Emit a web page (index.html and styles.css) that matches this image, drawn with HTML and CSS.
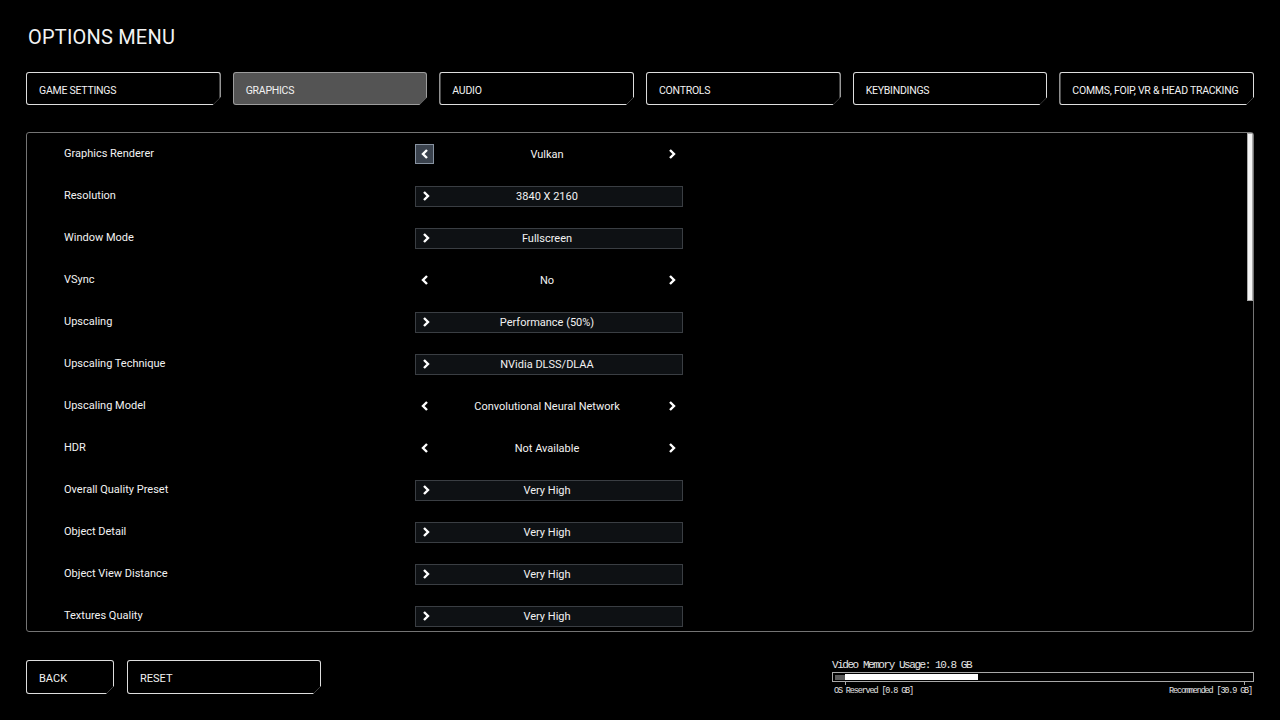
FILE: index.html
```html
<!DOCTYPE html>
<html lang="en">
<head>
  <meta charset="UTF-8">
  <title>Options Menu</title>
  <link rel="stylesheet" href="styles.css">
</head>
<body>

<div class="page">
  <h1>OPTIONS MENU</h1>

  <!-- Category tabs -->
  <div class="tabs">
    <div class="btn tab"><div class="btn-inner">GAME SETTINGS</div></div>
    <div class="btn tab active"><div class="btn-inner">GRAPHICS</div></div>
    <div class="btn tab"><div class="btn-inner">AUDIO</div></div>
    <div class="btn tab"><div class="btn-inner">CONTROLS</div></div>
    <div class="btn tab"><div class="btn-inner">KEYBINDINGS</div></div>
    <div class="btn tab"><div class="btn-inner">COMMS, FOIP, VR &amp; HEAD TRACKING</div></div>
  </div>

  <!-- Settings list -->
  <div class="panel">
    <div class="rows">
      <div class="row">
        <span class="label">Graphics Renderer</span>
        <div class="picker">
          <span class="arrow focused"><svg class="chev" viewBox="0 0 8 10"><path d="M6 1 2 5l4 4"/></svg></span>
          <span class="value">Vulkan</span>
          <span class="arrow"><svg class="chev" viewBox="0 0 8 10"><path d="M2 1l4 4-4 4"/></svg></span>
        </div>
      </div>
      <div class="row">
        <span class="label">Resolution</span>
        <div class="dropdown">
          <span class="arrow"><svg class="chev" viewBox="0 0 8 10"><path d="M2 1l4 4-4 4"/></svg></span>
          <span class="value">3840 X 2160</span>
        </div>
      </div>
      <div class="row">
        <span class="label">Window Mode</span>
        <div class="dropdown">
          <span class="arrow"><svg class="chev" viewBox="0 0 8 10"><path d="M2 1l4 4-4 4"/></svg></span>
          <span class="value">Fullscreen</span>
        </div>
      </div>
      <div class="row">
        <span class="label">VSync</span>
        <div class="picker">
          <span class="arrow"><svg class="chev" viewBox="0 0 8 10"><path d="M6 1 2 5l4 4"/></svg></span>
          <span class="value">No</span>
          <span class="arrow"><svg class="chev" viewBox="0 0 8 10"><path d="M2 1l4 4-4 4"/></svg></span>
        </div>
      </div>
      <div class="row">
        <span class="label">Upscaling</span>
        <div class="dropdown">
          <span class="arrow"><svg class="chev" viewBox="0 0 8 10"><path d="M2 1l4 4-4 4"/></svg></span>
          <span class="value">Performance (50%)</span>
        </div>
      </div>
      <div class="row">
        <span class="label">Upscaling Technique</span>
        <div class="dropdown">
          <span class="arrow"><svg class="chev" viewBox="0 0 8 10"><path d="M2 1l4 4-4 4"/></svg></span>
          <span class="value">NVidia DLSS/DLAA</span>
        </div>
      </div>
      <div class="row">
        <span class="label">Upscaling Model</span>
        <div class="picker">
          <span class="arrow"><svg class="chev" viewBox="0 0 8 10"><path d="M6 1 2 5l4 4"/></svg></span>
          <span class="value">Convolutional Neural Network</span>
          <span class="arrow"><svg class="chev" viewBox="0 0 8 10"><path d="M2 1l4 4-4 4"/></svg></span>
        </div>
      </div>
      <div class="row">
        <span class="label">HDR</span>
        <div class="picker">
          <span class="arrow"><svg class="chev" viewBox="0 0 8 10"><path d="M6 1 2 5l4 4"/></svg></span>
          <span class="value">Not Available</span>
          <span class="arrow"><svg class="chev" viewBox="0 0 8 10"><path d="M2 1l4 4-4 4"/></svg></span>
        </div>
      </div>
      <div class="row">
        <span class="label">Overall Quality Preset</span>
        <div class="dropdown">
          <span class="arrow"><svg class="chev" viewBox="0 0 8 10"><path d="M2 1l4 4-4 4"/></svg></span>
          <span class="value">Very High</span>
        </div>
      </div>
      <div class="row">
        <span class="label">Object Detail</span>
        <div class="dropdown">
          <span class="arrow"><svg class="chev" viewBox="0 0 8 10"><path d="M2 1l4 4-4 4"/></svg></span>
          <span class="value">Very High</span>
        </div>
      </div>
      <div class="row">
        <span class="label">Object View Distance</span>
        <div class="dropdown">
          <span class="arrow"><svg class="chev" viewBox="0 0 8 10"><path d="M2 1l4 4-4 4"/></svg></span>
          <span class="value">Very High</span>
        </div>
      </div>
      <div class="row">
        <span class="label">Textures Quality</span>
        <div class="dropdown">
          <span class="arrow"><svg class="chev" viewBox="0 0 8 10"><path d="M2 1l4 4-4 4"/></svg></span>
          <span class="value">Very High</span>
        </div>
      </div>
    </div>
    <div class="scroll"><div class="thumb"></div></div>
  </div>

  <!-- Footer: actions + VRAM meter -->
  <div class="footer">
    <div class="actions">
      <div class="btn back"><div class="btn-inner">BACK</div></div>
      <div class="btn reset"><div class="btn-inner">RESET</div></div>
    </div>
    <div class="vram">
      <div class="vram-title">Video Memory Usage: 10.8 GB</div>
      <div class="vram-bar">
        <span class="seg-os"></span>
        <span class="seg-used"></span>
        <span class="tick tick-os"></span>
        <span class="tick tick-rec"></span>
      </div>
      <div class="vram-notes">
        <span>OS Reserved [0.8 GB]</span>
        <span>Recommended [30.9 GB]</span>
      </div>
    </div>
  </div>
</div>

</body>
</html>
```

FILE: styles.css
```css
body {
  margin: 0;
  background: #000;
  color: #f2f2f2;
  font-family: Roboto, "Liberation Sans", sans-serif;
}

.page {
  padding: 25px 26px 0;
}

h1 {
  margin: 0;
  padding-left: 2px;
  font-size: 20px;
  line-height: 24px;
  font-weight: 400;
  letter-spacing: 0.2px;
}

/* Chamfered buttons: outer layer is the border, inner layer the fill */
.btn {
  background: #dedede;
  padding: 1px;
  border-radius: 3px;
  clip-path: polygon(0 0, 100% 0, 100% calc(100% - 8px), calc(100% - 8px) 100%, 0 100%);
  box-sizing: border-box;
}

.btn-inner {
  height: 100%;
  box-sizing: border-box;
  background: #000;
  border-radius: 2px;
  clip-path: polygon(0 0, 100% 0, 100% calc(100% - 5.4px), calc(100% - 5.4px) 100%, 0 100%);
  display: flex;
  align-items: center;
  padding: 2px 0 0 12px;
  font-size: 11px;
  font-weight: 400;
  white-space: nowrap;
  overflow: hidden;
}

.tabs {
  display: flex;
  gap: 12px;
  margin-top: 23px;
  height: 33px;
}

.tab {
  flex: 1 1 0;
  min-width: 0;
}

.tab .btn-inner {
  padding-top: 3px;
  font-size: 10.5px;
  letter-spacing: -0.25px;
}

.tab.active {
  background: #9d9d9d;
}

.tab.active .btn-inner {
  background: #545454;
}

/* Settings panel */
.panel {
  margin-top: 27px;
  height: 500px;
  box-sizing: border-box;
  border: 1px solid #747474;
  border-radius: 3px;
  display: flex;
  overflow: hidden;
}

.rows {
  flex: 1;
  overflow: hidden;
}

.row {
  display: grid;
  grid-template-columns: 351px 268px;
  align-items: center;
  height: 42px;
  padding-left: 37px;
}

.label {
  font-size: 11px;
  padding-bottom: 2px;
}

.picker,
.dropdown {
  display: flex;
  align-items: center;
  height: 21px;
  box-sizing: border-box;
  font-size: 11px;
}

.picker {
  padding-right: 2px;
}

.dropdown {
  background: #0e1114;
  border: 1px solid #3a3e43;
}

.value {
  flex: 1;
  text-align: center;
  padding-right: 2px;
}

.dropdown .value {
  padding-right: 23px;
}

.arrow {
  width: 19px;
  height: 20px;
  box-sizing: border-box;
  display: flex;
  align-items: center;
  justify-content: center;
}

.arrow.focused {
  background: #3a424d;
  border: 1px solid #8792a0;
}

.chev {
  width: 8px;
  height: 10px;
  fill: none;
  stroke: #fff;
  stroke-width: 2.4;
}

.scroll {
  width: 6px;
}

.thumb {
  height: 168px;
  background: #f4f4f4;
  border: 1px solid #a9a9a9;
  box-sizing: border-box;
}

/* Footer */
.footer {
  margin-top: 28px;
  display: flex;
  justify-content: space-between;
  align-items: flex-start;
}

.actions {
  display: flex;
  gap: 13px;
  height: 34px;
}

.back {
  width: 88px;
}

.reset {
  width: 194px;
}

.vram {
  width: 422px;
  font-family: "Liberation Mono", "DejaVu Sans Mono", monospace;
  color: #e4e4e4;
}

.vram-title {
  font-size: 11px;
  letter-spacing: -1.45px;
  line-height: 11px;
}

.vram-bar {
  position: relative;
  margin-top: 1px;
  height: 10px;
  box-sizing: border-box;
  border: 1px solid #a8a8a8;
  display: flex;
  align-items: center;
  padding: 0 2px;
}

.seg-os {
  width: 10px;
  height: 5px;
  background: #5a5a5a;
}

.seg-used {
  width: 133px;
  height: 6px;
  background: #fff;
}

.tick {
  position: absolute;
  top: 8px;
  width: 1px;
  height: 4px;
  background: #a8a8a8;
}

.tick-os {
  left: 12px;
}

.tick-rec {
  right: 8px;
}

.vram-notes {
  display: flex;
  justify-content: space-between;
  font-size: 8.5px;
  letter-spacing: -1.15px;
  line-height: 10px;
  padding: 4px 2px 0;
}
```
